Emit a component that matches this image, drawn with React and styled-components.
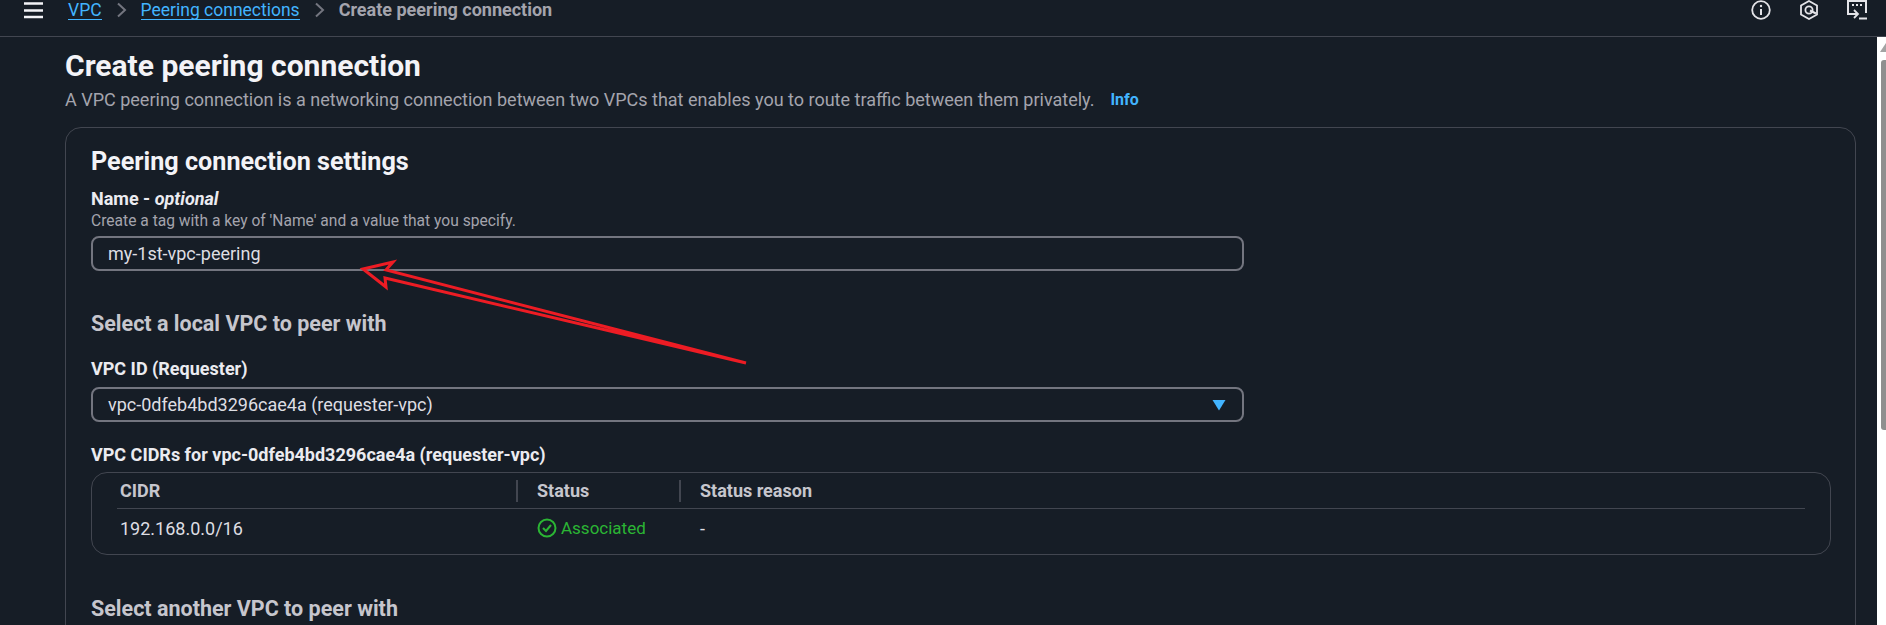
import styled, { createGlobalStyle } from "styled-components";

const GlobalStyle = createGlobalStyle`
  html, body {
    margin: 0;
    padding: 0;
    background: #161d26;
    overflow: hidden;
  }
  * { box-sizing: border-box; }
`;

const Page = styled.div`
  position: relative;
  width: 1886px;
  height: 625px;
  overflow: hidden;
  background: #161d26;
  font-family: Roboto, "Liberation Sans", sans-serif;
  color: #ebebf0;
`;

const TopBar = styled.header`
  display: flex;
  align-items: flex-start;
  height: 37px;
  padding: 0 19px 0 24px;
  border-bottom: 1px solid #424650;
`;

const Menu = styled.svg`
  width: 19px;
  height: 20px;
  margin-right: 25px;
  flex: none;
`;

const Crumbs = styled.nav`
  display: flex;
  align-items: center;
  height: 20px;
  font-size: 17.5px;
  line-height: 20px;
  flex: 1;
`;

const CrumbLink = styled.a`
  color: #42b4ff;
  border-bottom: 1px solid #42b4ff;
  height: 20px;
`;

const CrumbCurrent = styled.span`
  color: #a4a4ad;
  font-size: 18px;
  font-weight: 700;
`;

const Chevron = styled.svg`
  width: 11px;
  height: 16px;
  margin: 0 14px;
  flex: none;
`;

const TopIcons = styled.div`
  display: flex;
  align-items: flex-start;
  gap: 28px;
`;

const TopIcon = styled.svg`
  width: 20px;
  height: 20px;
  flex: none;
`;

const Body = styled.div`
  display: flex;
  height: 588px;
`;

const Main = styled.main`
  flex: 1;
  min-width: 0;
  padding: 11px 21px 0 65px;
`;

const Title = styled.h1`
  margin: 0;
  font-size: 30px;
  line-height: 36px;
  font-weight: 700;
  color: #f3f3f7;
`;

const Subtitle = styled.p`
  display: flex;
  align-items: center;
  margin: 6px 0 17px;
  font-size: 18px;
  line-height: 20px;
  color: #a4a4ad;
`;

const InfoLink = styled.a`
  margin-left: 16px;
  font-size: 16px;
  font-weight: 700;
  color: #42b4ff;
`;

const Card = styled.section`
  height: 600px;
  padding: 20px 24px 0 25px;
  border: 1px solid #424650;
  border-radius: 16px;
`;

const CardTitle = styled.h2`
  margin: 0 0 13px;
  font-size: 25.2px;
  line-height: 28px;
  font-weight: 700;
  color: #f3f3f7;
`;

const Label = styled.div`
  margin-top: ${(p) => p.$top || 0}px;
  font-size: 18px;
  line-height: 20px;
  font-weight: 700;
  color: #ebebf0;

  em {
    font-weight: 700;
    font-style: italic;
  }
`;

const Help = styled.div`
  margin-top: 4px;
  font-size: 15.6px;
  line-height: 16px;
  color: #a4a4ad;
`;

const Field = styled.div`
  display: flex;
  align-items: center;
  justify-content: space-between;
  width: 1153px;
  height: 35px;
  margin-top: ${(p) => p.$top}px;
  padding: 0 16px 0 15px;
  border: 2px solid #73757f;
  border-radius: 8px;
  font-size: 18px;
  color: #dedee3;
`;

const SectionHeading = styled.h3`
  margin: ${(p) => p.$top}px 0 0;
  font-size: 21.5px;
  line-height: 24px;
  font-weight: 700;
  color: #c6c6cd;
`;

const Caret = styled.svg`
  width: 14px;
  height: 12px;
  flex: none;
`;

const TableBox = styled.div`
  height: 83px;
  margin-top: 7px;
  padding: 0 25px;
  border: 1px solid #424650;
  border-radius: 16px;
`;

const Row = styled.div`
  display: grid;
  grid-template-columns: 399px 163px 1fr;
  align-items: center;
  height: ${(p) => p.$height}px;
  border-bottom: ${(p) => (p.$head ? "1px solid #424650" : "none")};
`;

const HeadCell = styled.div`
  display: flex;
  align-items: center;
  padding-left: 3px;
  font-size: 18px;
  font-weight: 700;
  color: #c6c6cd;

  & + &::before {
    content: "";
    width: 2px;
    height: 22px;
    margin: 0 19px 0 -3px;
    background: #424650;
  }
`;

const Cell = styled.div`
  display: flex;
  align-items: center;
  padding-left: ${(p) => p.$pad}px;
  font-size: 18px;
  color: #dedee3;
`;

const StatusOk = styled.span`
  display: flex;
  align-items: center;
  gap: 4px;
  font-size: 17px;
  color: #2bb534;
`;

const Track = styled.aside`
  width: 9px;
  flex: none;
  padding: 6px 0 0 4px;
  background: #fff;
`;

const TrackArrow = styled.div`
  width: 0;
  height: 0;
  margin-left: -1px;
  border-left: 6px solid transparent;
  border-bottom: 9px solid #a3a3a3;
`;

const Thumb = styled.div`
  width: 5px;
  height: 370px;
  margin-top: 8px;
  background: #8f8f8f;
  border-radius: 3px 0 0 3px;
`;

const Arrow = styled.svg`
  position: absolute;
  left: 0;
  top: 0;
  width: 1886px;
  height: 625px;
  pointer-events: none;
`;

const App = () => {
  return (
    <>
      <GlobalStyle />
      <Page>
        <TopBar>
          <Menu viewBox="0 0 19 20">
            <path d="M0 3.5h19M0 10.5h19M0 17h19" stroke="#f3f3f7" strokeWidth="2.4" />
          </Menu>
          <Crumbs>
            <CrumbLink>VPC</CrumbLink>
            <Chevron viewBox="0 0 11 16">
              <path d="M2 1.5l7 6.5-7 6.5" fill="none" stroke="#73757f" strokeWidth="2" />
            </Chevron>
            <CrumbLink>Peering connections</CrumbLink>
            <Chevron viewBox="0 0 11 16">
              <path d="M2 1.5l7 6.5-7 6.5" fill="none" stroke="#73757f" strokeWidth="2" />
            </Chevron>
            <CrumbCurrent>Create peering connection</CrumbCurrent>
          </Crumbs>
          <TopIcons>
            <TopIcon viewBox="0 0 20 20">
              <circle cx="10" cy="10" r="8.8" fill="none" stroke="#e4e4e8" strokeWidth="1.8" />
              <path d="M10 9v6" stroke="#e4e4e8" strokeWidth="2" />
              <circle cx="10" cy="6" r="1.2" fill="#e4e4e8" />
            </TopIcon>
            <TopIcon viewBox="0 0 20 20">
              <path d="M10 1l8 4.5v9L10 19l-8-4.5v-9z" fill="none" stroke="#e4e4e8" strokeWidth="1.8" />
              <circle cx="10" cy="10" r="3.6" fill="none" stroke="#e4e4e8" strokeWidth="1.8" />
              <path d="M11 10.5l6 3" stroke="#e4e4e8" strokeWidth="2" />
            </TopIcon>
            <TopIcon viewBox="0 0 20 20">
              <path d="M1 0v14h3M19 0v13" fill="none" stroke="#e4e4e8" strokeWidth="2" />
              <path d="M1 1h18" stroke="#e4e4e8" strokeWidth="2" />
              <path d="M5 5h2M9 5h2M13 5h2" stroke="#e4e4e8" strokeWidth="2" />
              <path d="M3 14h7M7 10l4 4-4 4" fill="none" stroke="#e4e4e8" strokeWidth="1.8" />
              <path d="M12 18.5h8" stroke="#e4e4e8" strokeWidth="2" />
            </TopIcon>
          </TopIcons>
        </TopBar>
        <Body>
          <Main>
            <Title>Create peering connection</Title>
            <Subtitle>
              A VPC peering connection is a networking connection between two VPCs that enables you to route traffic between them privately.
              <InfoLink>Info</InfoLink>
            </Subtitle>
            <Card>
              <CardTitle>Peering connection settings</CardTitle>
              <Label>
                Name - <em>optional</em>
              </Label>
              <Help>Create a tag with a key of 'Name' and a value that you specify.</Help>
              <Field $top={7}>my-1st-vpc-peering</Field>
              <SectionHeading $top={41}>Select a local VPC to peer with</SectionHeading>
              <Label $top={23}>VPC ID (Requester)</Label>
              <Field $top={8}>
                vpc-0dfeb4bd3296cae4a (requester-vpc)
                <Caret viewBox="0 0 14 12">
                  <path d="M0.5 1h13L7 11.5z" fill="#42b4ff" />
                </Caret>
              </Field>
              <Label $top={23}>VPC CIDRs for vpc-0dfeb4bd3296cae4a (requester-vpc)</Label>
              <TableBox>
                <Row $head $height={36}>
                  <HeadCell>CIDR</HeadCell>
                  <HeadCell>Status</HeadCell>
                  <HeadCell>Status reason</HeadCell>
                </Row>
                <Row $height={38}>
                  <Cell $pad={3}>192.168.0.0/16</Cell>
                  <Cell $pad={21}>
                    <StatusOk>
                      <svg width="20" height="20" viewBox="0 0 20 20">
                        <circle cx="10" cy="10" r="8.5" fill="none" stroke="#2bb534" strokeWidth="2" />
                        <path d="M6 10l3 3 5-6" fill="none" stroke="#2bb534" strokeWidth="2" />
                      </svg>
                      Associated
                    </StatusOk>
                  </Cell>
                  <Cell $pad={21}>-</Cell>
                </Row>
              </TableBox>
              <SectionHeading $top={42}>Select another VPC to peer with</SectionHeading>
            </Card>
          </Main>
          <Track>
            <TrackArrow />
            <Thumb />
          </Track>
        </Body>
        <Arrow viewBox="0 0 1886 625">
          <path
            d="M363 269L393 262L386 270L746 363L385 278L386 287Z"
            fill="none"
            stroke="#ed1c24"
            strokeWidth="3"
          />
        </Arrow>
      </Page>
    </>
  );
};

export default App;
